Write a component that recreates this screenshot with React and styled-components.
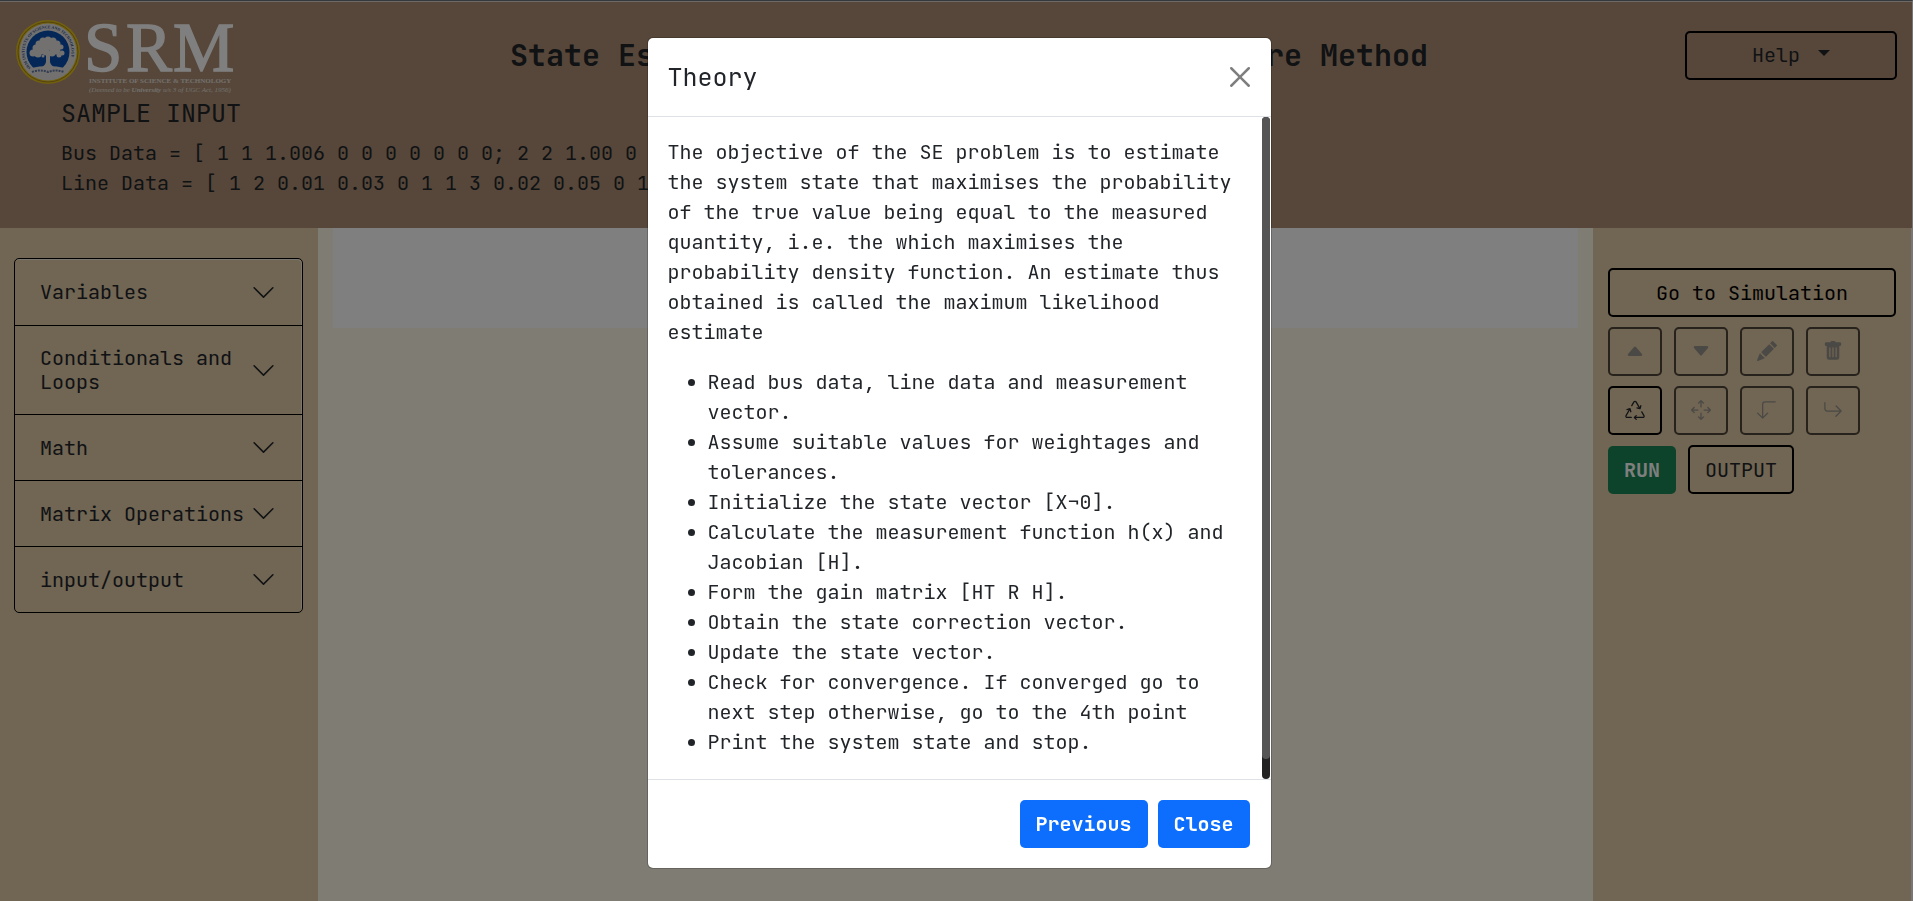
import React from "react";
import styled, { createGlobalStyle, css } from "styled-components";
import {
  BsCaretUpFill,
  BsCaretDownFill,
  BsPencilFill,
  BsTrashFill,
  BsRecycle,
  BsArrowsMove,
  BsArrow90DegDown,
  BsArrowReturnRight,
} from "react-icons/bs";

const GlobalStyle = createGlobalStyle`
  *, *::before, *::after { box-sizing: border-box; }
  body {
    margin: 0;
    background: #fff8e8;
    color: #212529;
    font-family: "JetBrains Mono", "DejaVu Sans Mono", "Liberation Mono", monospace;
    font-size: 20px;
    line-height: 30px;
  }
  button { font: inherit; color: inherit; cursor: pointer; }
  h1, h2, p, ul { margin: 0; font-weight: 400; }
`;

const Page = styled.div`
  display: flex;
  flex-direction: column;
  min-height: 100vh;
  border-top: 1px solid #6b7078;
  border-right: 1px solid #eee;
`;

const Header = styled.header`
  background: #ae8e74;
  border-top: 1px solid #d8d0c8;
  padding-bottom: 30px;
`;

const TopRow = styled.div`
  display: grid;
  grid-template-columns: 268px 1fr 242px;
  height: 96px;
`;

const LogoLink = styled.a`
  padding: 15px 0 0 15px;

  svg { overflow: visible; }
`;

const PageTitle = styled.h1`
  font-size: 30px;
  line-height: 36px;
  font-weight: 700;
  text-align: center;
  padding-top: 35px;
  white-space: nowrap;
`;

const HelpCell = styled.div`
  padding: 29px 15px 0;
`;

const Sample = styled.section`
  padding: 0 61px;
`;

const SampleTitle = styled.h2`
  font-size: 25px;
  margin-bottom: 10px;
`;

const SampleLine = styled.p`
  white-space: nowrap;
`;

const Workspace = styled.main`
  flex: 1;
  display: grid;
  grid-template-columns: 318px 1fr 318px;
  border-right: 1px solid #eee;
`;

const SidePanel = styled.aside`
  background: #e2caa6;
  padding: ${(p) => p.$top}px 15px 15px ${(p) => p.$left}px;
`;

const Canvas = styled.section`
  background: #fff8e8;
  padding: 0 15px;
`;

const DropArea = styled.div`
  height: 100px;
  background: #fff;
`;

const Accordion = styled.div`
  border: 1px solid #000;
  border-radius: 5px;
  overflow: hidden;
  box-shadow: inset -1px 1px 0 #f4ece0;
`;

const AccordionButton = styled.button`
  display: flex;
  align-items: center;
  justify-content: space-between;
  width: 100%;
  min-height: 66px;
  padding: 20px 26px 20px 25px;
  border: 0;
  background: transparent;
  line-height: 24px;
  text-align: left;

  & + & { border-top: 1px solid #000; }

  svg { flex: none; }
`;

const Tools = styled.div`
  display: flex;
  flex-direction: column;
  gap: 10px;
`;

const ToolRow = styled.div`
  display: flex;
  align-items: flex-end;
  gap: 12px;
`;

const OutlineButton = styled.button`
  display: flex;
  align-items: center;
  justify-content: center;
  gap: 18px;
  width: ${(p) => p.$width || "auto"};
  height: 49px;
  padding: 0 15px;
  border: 2px solid #000;
  border-radius: 5px;
  background: transparent;
  color: ${(p) => (p.$black ? "#000" : "#212529")};

  &:disabled { opacity: 0.65; color: #6c757d; }
`;

const IconButton = styled(OutlineButton)`
  width: 54px;
  padding-bottom: 1px;
`;

const HelpButton = styled(OutlineButton)`
  width: 100%;
  padding-bottom: 1px;
`;

const solid = {
  primary: css`background: #0d6efd;`,
  success: css`background: #198754;`,
};

const SolidButton = styled.button`
  height: 48px;
  padding: 0 16px;
  border: 0;
  border-radius: 5px;
  color: #fff;
  font-weight: 700;
  ${(p) => solid[p.$tone]}
`;

const Caret = styled.span`
  border: 6px solid transparent;
  border-top-color: #212529;
  border-bottom: 0;
  margin-bottom: 4px;
`;

const Backdrop = styled.div`
  position: fixed;
  inset: 0;
  display: flex;
  align-items: flex-start;
  justify-content: center;
  padding: 37px 0 32px;
  background: rgba(0, 0, 0, 0.5);
`;

const Dialog = styled.div`
  display: flex;
  flex-direction: column;
  width: 625px;
  max-height: 100%;
  margin-left: 5px;
  background: #fff;
  background-clip: padding-box;
  border: 1px solid rgba(0, 0, 0, 0.2);
  border-radius: 6px;
  overflow: hidden;
`;

const DialogHeader = styled.div`
  display: flex;
  align-items: center;
  justify-content: space-between;
  padding: 20px 21px 20px 20px;
  border-bottom: 1px solid #dee2e6;
`;

const DialogTitle = styled.h2`
  font-size: 25px;
  line-height: 38px;
`;

const CloseButton = styled.button`
  display: flex;
  padding: 0;
  border: 0;
  background: transparent;
  opacity: 0.5;
`;

const DialogBody = styled.div`
  display: flex;
  flex: 1 1 auto;
  min-height: 0;
  padding-right: 1px;
`;

const ScrollArea = styled.div`
  flex: 1;
  min-width: 0;
  padding: 20px;
  overflow-y: auto;
  scrollbar-width: none;

  ul { margin: 20px 0; padding-left: 40px; }
`;

const ScrollRail = styled.div`
  width: 8px;
  background: #222;
  border-radius: 4px;
`;

const ScrollThumb = styled.div`
  height: 97%;
  background: #555;
  border-radius: 4px;
`;

const DialogFooter = styled.div`
  display: flex;
  justify-content: flex-end;
  gap: 10px;
  padding: 20px 21px 20px 20px;
  border-top: 1px solid #dee2e6;
`;

const Chevron = () => (
  <svg width="25" height="25" viewBox="0 0 16 16" fill="#212529" aria-hidden="true">
    <path fillRule="evenodd" d="M1.646 4.646a.5.5 0 0 1 .708 0L8 10.293l5.646-5.647a.5.5 0 0 1 .708.708l-6 6a.5.5 0 0 1-.708 0l-6-6a.5.5 0 0 1 0-.708z" />
  </svg>
);

const leaves = [
  [48, 38, 4], [43, 39, 4], [53, 39, 4], [39, 42, 4], [57, 42, 4], [46, 43, 5],
  [51, 44, 5], [36, 46, 4], [61, 45, 3], [41, 48, 5], [56, 48, 5], [33, 51, 4],
  [62, 51, 3], [38, 52, 4], [46, 50, 4], [52, 51, 4], [59, 53, 3], [43, 54, 2],
];

const Logo = () => (
  <svg width="222" height="78" viewBox="15 15 222 78" role="img" aria-label="SRM Institute of Science and Technology">
    <defs>
      <path id="seal-arc" d="M31 66A23.5 23.5 0 1 1 65 66" />
    </defs>
    <circle cx="48" cy="50" r="32" fill="#e3c11c" />
    <circle cx="48" cy="50" r="30" fill="none" stroke="#a8881a" strokeWidth="1" />
    <circle cx="48" cy="50" r="28.5" fill="#e4e2e0" />
    <circle cx="48" cy="50" r="21.5" fill="#0a4fae" />
    <text fontFamily="Liberation Serif, serif" fontSize="4" fontWeight="700" fill="#2d4f8c">
      <textPath href="#seal-arc">SRM INSTITUTE OF SCIENCE AND TECHNOLOGY</textPath>
    </text>
    <g fill="#e4e2e0">
      {leaves.map(([x, y, r]) => <circle key={`${x}-${y}`} cx={x} cy={y} r={r - 0.5} />)}
      <path d="M46 52h4v8q1 4 6 6H40q5-2 6-6z" />
      <path d="M31 66q17-4 34 0l3 5q-20 5-40 0z" />
    </g>
    <path d="M32 70q8-3 16 0q8-3 16 0" fill="none" stroke="#2d4f8c" strokeWidth="2" strokeDasharray="2 1" opacity="0.7" />
    <g fill="#fff" fontFamily="Liberation Serif, serif">
      <g stroke="#fff" strokeWidth="1.4" fontSize="69">
        <text x="84" y="69">S</text>
        <text x="126" y="69">R</text>
        <text x="173" y="69">M</text>
      </g>
      <text x="89" y="81" fontSize="7" fontWeight="700" fill="#e4e0dc">INSTITUTE OF SCIENCE &amp; TECHNOLOGY</text>
      <text x="89" y="90" fontSize="7" fontStyle="italic" fill="#e4e0dc">(Deemed to be <tspan fontWeight="700">University</tspan> u/s 3 of UGC Act, 1956)</text>
    </g>
  </svg>
);

const sections = ["Variables", "Conditionals and Loops", "Math", "Matrix Operations", "input/output"];

const toolRows = [
  [
    { label: "Move up", Icon: BsCaretUpFill, disabled: true },
    { label: "Move down", Icon: BsCaretDownFill, disabled: true },
    { label: "Edit", Icon: BsPencilFill, disabled: true },
    { label: "Delete", Icon: BsTrashFill, disabled: true },
  ],
  [
    { label: "Reset", Icon: BsRecycle, disabled: false },
    { label: "Move", Icon: BsArrowsMove, disabled: true },
    { label: "Step down", Icon: BsArrow90DegDown, disabled: true },
    { label: "Step in", Icon: BsArrowReturnRight, disabled: true },
  ],
];

const steps = [
  "Read bus data, line data and measurement vector.",
  "Assume suitable values for weightages and tolerances.",
  "Initialize the state vector [X¬0].",
  "Calculate the measurement function h(x) and Jacobian [H].",
  "Form the gain matrix [HT R H].",
  "Obtain the state correction vector.",
  "Update the state vector.",
  "Check for convergence. If converged go to next step otherwise, go to the 4th point",
  "Print the system state and stop.",
];

export default function App() {
  return (
    <>
      <GlobalStyle />
      <Page>
        <Header>
          <TopRow>
            <LogoLink href="#"><Logo /></LogoLink>
            <PageTitle>State Estimation using Weighted Least Square Method</PageTitle>
            <HelpCell>
              <HelpButton>Help <Caret /></HelpButton>
            </HelpCell>
          </TopRow>
          <Sample>
            <SampleTitle>SAMPLE INPUT</SampleTitle>
            <SampleLine>Bus Data = [ 1 1 1.006 0 0 0 0 0 0 0; 2 2 1.00 0 0 0 0 0 0 0 ]</SampleLine>
            <SampleLine>Line Data = [ 1 2 0.01 0.03 0 1 1 3 0.02 0.05 0 1 ]</SampleLine>
          </Sample>
        </Header>
        <Workspace>
          <SidePanel $top={30} $left={14}>
            <Accordion>
              {sections.map((name) => (
                <AccordionButton key={name} type="button">{name}<Chevron /></AccordionButton>
              ))}
            </Accordion>
          </SidePanel>
          <Canvas><DropArea /></Canvas>
          <SidePanel $top={40} $left={15}>
            <Tools>
              <OutlineButton $black $width="100%">Go to Simulation</OutlineButton>
              {toolRows.map((row, i) => (
                <ToolRow key={i}>
                  {row.map(({ label, Icon, disabled }) => (
                    <IconButton key={label} aria-label={label} disabled={disabled}>
                      <Icon size={20} />
                    </IconButton>
                  ))}
                </ToolRow>
              ))}
              <ToolRow>
                <SolidButton $tone="success">RUN</SolidButton>
                <OutlineButton>OUTPUT</OutlineButton>
              </ToolRow>
            </Tools>
          </SidePanel>
        </Workspace>
      </Page>
      <Backdrop>
        <Dialog role="dialog" aria-modal="true" aria-labelledby="theory-title">
          <DialogHeader>
            <DialogTitle id="theory-title">Theory</DialogTitle>
            <CloseButton aria-label="Close dialog">
              <svg width="20" height="20" viewBox="0 0 16 16" fill="#000" aria-hidden="true">
                <path d="M.293.293a1 1 0 0 1 1.414 0L8 6.586 14.293.293a1 1 0 1 1 1.414 1.414L9.414 8l6.293 6.293a1 1 0 0 1-1.414 1.414L8 9.414l-6.293 6.293a1 1 0 0 1-1.414-1.414L6.586 8 .293 1.707a1 1 0 0 1 0-1.414z" />
              </svg>
            </CloseButton>
          </DialogHeader>
          <DialogBody>
            <ScrollArea>
              <p>
                The objective of the SE problem is to estimate the system state that maximises the
                probability of the true value being equal to the measured quantity, i.e. the which
                maximises the probability density function. An estimate thus obtained is called the
                maximum likelihood estimate
              </p>
              <ul>
                {steps.map((step) => <li key={step}>{step}</li>)}
              </ul>
            </ScrollArea>
            <ScrollRail aria-hidden="true"><ScrollThumb /></ScrollRail>
          </DialogBody>
          <DialogFooter>
            <SolidButton $tone="primary">Previous</SolidButton>
            <SolidButton $tone="primary">Close</SolidButton>
          </DialogFooter>
        </Dialog>
      </Backdrop>
    </>
  );
}
